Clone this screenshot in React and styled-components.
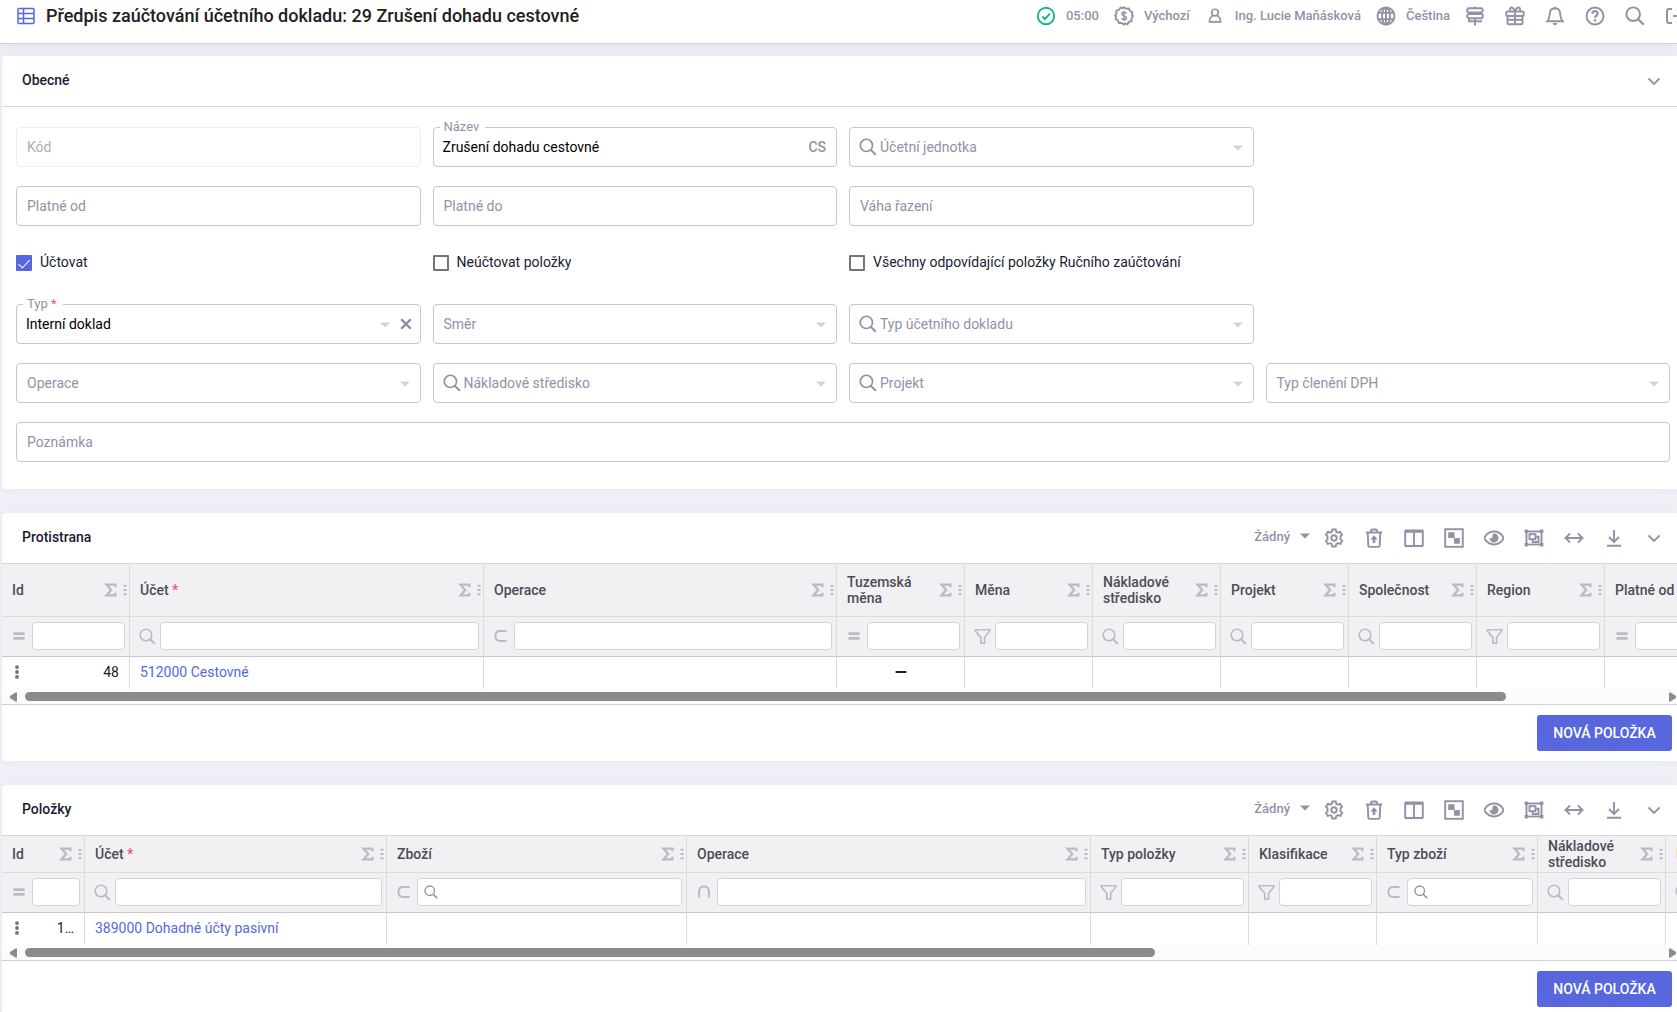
import React from "react";
import styled, { createGlobalStyle, css } from "styled-components";

const App = () => {
  return (
    <Page>
      <GlobalStyle />
      <Header />
      <Main>
        <General />
        <Grid
          title="Protistrana"
          columns={counterpartColumns}
          cells={[<>48</>, <a href="#512000">512000 Cestovné</a>, null, <Icon name="dash" size={12} />]}
          headHeight={53}
          thumb={90.5}
        />
        <Grid
          title="Položky"
          columns={itemColumns}
          cells={[<>1…</>, <a href="#389000">389000 Dohadné účty pasivní</a>]}
          headHeight={37}
          thumb={69.1}
        />
      </Main>
    </Page>
  );
};

export default App;

const counterpartColumns = [
  { name: "Id", width: 128, filter: "equals", align: "right" },
  { name: "Účet", width: 354, filter: "search", required: true },
  { name: "Operace", width: 353, filter: "subset" },
  { name: "Tuzemská měna", width: 128, filter: "equals", align: "center" },
  { name: "Měna", width: 128, filter: "funnel" },
  { name: "Nákladové středisko", width: 128, filter: "search" },
  { name: "Projekt", width: 128, filter: "search" },
  { name: "Společnost", width: 128, filter: "search" },
  { name: "Region", width: 128, filter: "funnel" },
  { name: "Platné od", width: 128, filter: "equals" },
];

const itemColumns = [
  { name: "Id", width: 83, filter: "equals", align: "right" },
  { name: "Účet", width: 302, filter: "search", required: true },
  { name: "Zboží", width: 300, filter: "subset", lookup: true },
  { name: "Operace", width: 404, filter: "intersect" },
  { name: "Typ položky", width: 158, filter: "funnel" },
  { name: "Klasifikace", width: 128, filter: "funnel" },
  { name: "Typ zboží", width: 161, filter: "subset", lookup: true },
  { name: "Nákladové středisko", width: 128, filter: "search" },
  { name: "Projekt", width: 128, filter: "search" },
];

// all icons live on a 20x20 grid
const icons = {
  table: (
    <>
      <rect x="2" y="2.5" width="16" height="15" rx="1" strokeWidth="1.5" />
      <path d="M2 7.5h16M2 12.5h16M7.5 2.5v15" strokeWidth="1.5" />
    </>
  ),
  check: (
    <>
      <circle cx="10" cy="10" r="8.2" />
      <path d="M6.3 10.3l2.7 2.7 4.8-5.4" />
    </>
  ),
  coin: (
    <>
      <path d="M10 1.2l2.2 1.5 2.7-.3 1 2.5 2.4 1.3-.4 2.7 1 1.1-1.4 2.3.1 2.7-2.6.9-1.5 2.2-2.5-.6-1 1-2.4-1.6-2.7.2-.9-2.5L1.7 13l.5-2.6L1 9.6l1.5-2.2-.1-2.7 2.6-.9 1.6-2.2 2.4.6z" />
      <path d="M12.3 7.7c-.3-1-1.2-1.4-2.3-1.4-1.2 0-2.2.5-2.2 1.7 0 2.7 4.6 1.2 4.6 3.9 0 1.2-1.1 1.8-2.4 1.8s-2.2-.6-2.4-1.6M10 5v10" strokeWidth="1.4" />
    </>
  ),
  user: (
    <>
      <circle cx="10" cy="6.2" r="3.7" />
      <path d="M7.4 9.3L6 11c-1.2.8-2 2-2 3.6v1.9h12v-1.9c0-1.6-.8-2.800-2-3.600l-1.400-1.700" />
    </>
  ),
  globe: (
    <>
      <circle cx="10" cy="10" r="8.5" />
      <ellipse cx="10" cy="10" rx="4" ry="8.5" />
      <path d="M2.8 6.8h14.4M2.8 13.2h14.4M10 1.5v17" />
    </>
  ),
  signpost: (
    <path d="M10 .5v1.7M10 6.5v1.5M10 12v7.5M3.5 2.2h13l1.5 2.1-1.5 2.2h-13c-.8 0-1.2-.5-1.2-1V3.2c0-.6.4-1 1.2-1zM16.5 8h-13L2 10l1.500 2.200h13c.8 0 1.200-.5 1.200-1V9c0-.6-.4-1-1.200-1zM4 12.200v3h13" />
  ),
  gift: (
    <>
      <rect x="1.3" y="5.5" width="17.4" height="4.5" rx="1" />
      <path d="M2.5 10v7c0 .8.5 1.3 1.300 1.300h12.400c.8 0 1.300-.5 1.300-1.300v-7M10 5.500v12.800M2.500 13.800h15M10 5.500C9 2.800 7.800 1.300 6.300 1.500 4.700 1.700 4.500 4 5.500 5.500M10 5.500c1-2.700 2.200-4.200 3.700-4 1.600.2 1.800 2.500.8 4" />
    </>
  ),
  bell: (
    <>
      <path d="M10 .7v1.600M10 2.300c-3.300 0-5 2.300-5.200 5.200-.3 3.800-.8 6-2.600 7.800h15.600c-1.800-1.800-2.300-4-2.600-7.800C15 4.600 13.300 2.300 10 2.300z" />
      <path d="M7.800 17h4.400c-.2 1.400-1 2.200-2.200 2.200S8 18.400 7.800 17z" fill="currentColor" stroke="none" />
    </>
  ),
  question: (
    <>
      <circle cx="10" cy="10" r="8.5" />
      <path d="M7.3 7.7C7.400 6 8.500 5.200 10 5.200s2.700.9 2.700 2.400c0 1.900-2.600 2.100-2.600 4.200" strokeWidth="2.2" />
      <path d="M10 13.3v2.2" strokeWidth="2.4" />
    </>
  ),
  search: (
    <>
      <circle cx="8.2" cy="8.2" r="6.8" />
      <path d="M13.2 13.2l5.5 5.5" strokeWidth="2.3" />
    </>
  ),
  logout: <path d="M7 3H4.2C2.8 3 2 3.8 2 5v10c0 1.2.8 2 2.2 2H7M8 10h10M14.5 6l4 4-4 4" />,
  gear: (
    <>
      <path d="M8.3 1.5h3.4l.5 2.3 1.7.9 2.2-.9 1.9 2.8-1.5 1.8c-.2.9-.2 1.7 0 2.8l1.7 1.7-1.8 2.9-2.4-.7-1.7 1.1-.6 2.3H8.3l-.6-2.3-1.6-1-2.4.7-1.8-2.9 1.7-1.7c-.2-1-.2-1.9 0-2.9L2 6.7l1.9-2.900 2.200.9 1.700-.9z" />
      <circle cx="10" cy="10" r="2.7" />
    </>
  ),
  trash: (
    <>
      <path d="M1.8 4.5h16.4M7 4.3V2.8c0-.8.5-1.3 1.3-1.3h3.4c.8 0 1.3.5 1.3 1.3v1.5M3.7 4.5l.6 13c0 .9.5 1.4 1.3 1.4h8.8c.8 0 1.300-.5 1.300-1.400l.6-13" />
      <path d="M10 7.2l3.6 4.2h-2.3v3.7H8.7v-3.7H6.4z" fill="currentColor" stroke="none" />
    </>
  ),
  columns: (
    <>
      <rect x="1.2" y="2.5" width="17.6" height="15.5" rx=".5" />
      <path d="M1.2 3.5h17.6" strokeWidth="2.6" />
      <path d="M10 3v15" />
    </>
  ),
  squares: (
    <>
      <rect x="1.2" y="1.2" width="17.6" height="17.6" />
      <path d="M4.2 4.2h6.3v5.8h5.3v5.8H10V10H4.2z" fill="currentColor" stroke="none" />
    </>
  ),
  eye: (
    <>
      <path d="M.2 10C2.5 5.7 6 3.5 10 3.5s7.5 2.2 9.8 6.5c-2.3 4.3-5.8 6.5-9.8 6.5S2.5 14.3.2 10z" />
      <path d="M10 5.5A4.5 4.5 0 1 1 5.5 10c.6.4 1.4.4 2 0 1.2-.7 1.2-1.7.9-2.7C8.6 6.3 9 5.6 10 5.5z" fill="currentColor" stroke="none" />
    </>
  ),
  group: (
    <>
      <rect x="2.5" y="3.5" width="15" height="13" />
      <rect x="5.5" y="6.2" width="6" height="5" />
      <path d="M11.5 8.7h3V14H8.7v-2.8" />
      <path d="M.6 1.6H4V5H.6zM16 1.6h3.4V5H16zM.6 15H4v3.4H.6zM16 15h3.4v3.4H16z" fill="currentColor" stroke="none" />
    </>
  ),
  arrows: <path d="M1.5 10h17M6 5.5L1.5 10 6 14.5M14 5.5l4.5 4.5-4.5 4.5" />,
  download: <path d="M10 2v12M5 9l5 5 5-5M3 17.8h14" />,
  chevron: <path d="M4.5 7.5L10 13l5.5-5.5" />,
  clear: <path d="M2 2l16 16M18 2L2 18" strokeWidth="3.8" />,
  funnel: <path d="M1.5 2h17v1.5l-6 7.5v7H8v-7L1.500 3.500z" />,
  equals: <path d="M2 6.500h16M2 13.500h16" strokeWidth="4" />,
  subset: <path d="M18 3H9c-4 0-7 2.500-7 7s3 7 7 7h9" strokeWidth="2.8" />,
  intersect: <path d="M3 18V9c0-4 2.500-7 7-7s7 3 7 7v9" strokeWidth="2.8" />,
  sigma: <path d="M16.300 6V2.300H3.500L10.300 10l-6.800 7.700h12.800V14" strokeWidth="3.2" />,
  caret: <path d="M0 5h20L10 15z" fill="currentColor" stroke="none" />,
  left: <path d="M16 1v18h-3L2 12V8l11-7z" fill="currentColor" stroke="none" />,
  right: <path d="M4 1v18h3l11-7V8L7 1z" fill="currentColor" stroke="none" />,
  dash: <path d="M1 10h18" strokeWidth="3.4" />,
  more: (
    <g fill="currentColor" stroke="none">
      <circle cx="10" cy="3" r="2.8" />
      <circle cx="10" cy="10" r="2.8" />
      <circle cx="10" cy="17" r="2.8" />
    </g>
  ),
  drag: <path d="M7.500 3h5M7.500 10h5M7.500 17h5" strokeWidth="3.4" />,
};

const Icon = ({ name, size = 20 }) => (
  <Svg viewBox="0 0 20 20" width={size} height={size} aria-hidden="true">
    {icons[name]}
  </Svg>
);

const Header = () => (
  <TopBar>
    <TitleBox>
      <Icon name="table" />
      <Title>Předpis zaúčtování účetního dokladu: 29 Zrušení dohadu cestovné</Title>
    </TitleBox>
    <Menu>
      <MenuItem $ok>
        <IconBox>
          <Icon name="check" />
        </IconBox>
        <span>05:00</span>
      </MenuItem>
      <MenuItem>
        <IconBox>
          <Icon name="coin" />
        </IconBox>
        <span>Výchozí</span>
      </MenuItem>
      <MenuItem>
        <IconBox>
          <Icon name="user" size={18} />
        </IconBox>
        <span>Ing. Lucie Maňásková</span>
      </MenuItem>
      <MenuItem>
        <IconBox>
          <Icon name="globe" />
        </IconBox>
        <span>Čeština</span>
      </MenuItem>
      {["signpost", "gift", "bell", "question", "search", "logout"].map((name) => (
        <IconButton key={name} aria-label={name}>
          <Icon name={name} />
        </IconButton>
      ))}
    </Menu>
  </TopBar>
);

const Field = ({ id, label, value, kind = "text", lookup, required, disabled, lang, wide }) => (
  <FieldBox $wide={wide}>
    {kind === "select" ? (
      <Select id={id} defaultValue={value || ""}>
        <option value=""></option>
        {value && <option value={value}>{value}</option>}
      </Select>
    ) : (
      <Input id={id} defaultValue={value} disabled={disabled} />
    )}
    <Label htmlFor={id} $floating={!!value} $lookup={lookup} $disabled={disabled}>
      {lookup && <Icon name="search" size={18} />}
      <span>
        {label}
        {required && <Star> *</Star>}
      </span>
    </Label>
    <Adornment>
      {lang && <Lang>{lang}</Lang>}
      {(kind === "select" || lookup) && (
        <Caret>
          <Icon name="caret" size={10} />
        </Caret>
      )}
      {kind === "select" && value && (
        <Clear type="button" aria-label="Vymazat">
          <Icon name="clear" size={12} />
        </Clear>
      )}
    </Adornment>
  </FieldBox>
);

const Check = ({ id, label, checked }) => (
  <CheckBox>
    <input type="checkbox" id={id} defaultChecked={checked} />
    <label htmlFor={id}>{label}</label>
  </CheckBox>
);

const General = () => (
  <Card>
    <CardHead>
      <CardTitle>Obecné</CardTitle>
      <Tools>
        <IconButton aria-label="Sbalit">
          <Icon name="chevron" />
        </IconButton>
      </Tools>
    </CardHead>
    <Form>
      <Row>
        <Field id="kod" label="Kód" disabled />
        <Field id="nazev" label="Název" value="Zrušení dohadu cestovné" lang="CS" />
        <Field id="jednotka" label="Účetní jednotka" lookup />
      </Row>
      <Row>
        <Field id="od" label="Platné od" />
        <Field id="do" label="Platné do" />
        <Field id="vaha" label="Váha řazení" />
      </Row>
      <Row>
        <Check id="uctovat" label="Účtovat" checked />
        <Check id="neuctovat" label="Neúčtovat položky" />
        <Check id="vsechny" label="Všechny odpovídající položky Ručního zaúčtování" />
      </Row>
      <Row>
        <Field id="typ" label="Typ" kind="select" value="Interní doklad" required />
        <Field id="smer" label="Směr" kind="select" />
        <Field id="typdokladu" label="Typ účetního dokladu" lookup />
      </Row>
      <Row>
        <Field id="operace" label="Operace" kind="select" />
        <Field id="stredisko" label="Nákladové středisko" lookup />
        <Field id="projekt" label="Projekt" lookup />
        <Field id="dph" label="Typ členění DPH" kind="select" />
      </Row>
      <Row>
        <Field id="poznamka" label="Poznámka" wide />
      </Row>
    </Form>
  </Card>
);

const Grid = ({ title, columns, cells, headHeight, thumb }) => (
  <Card>
    <CardHead>
      <CardTitle>{title}</CardTitle>
      <Tools>
        <NoneButton>
          Žádný
          <Icon name="caret" size={10} />
        </NoneButton>
        {["gear", "trash", "columns", "squares", "eye", "group", "arrows", "download", "chevron"].map((name) => (
          <IconButton key={name} aria-label={name}>
            <Icon name={name} />
          </IconButton>
        ))}
      </Tools>
    </CardHead>
    <Scroller>
      <Table>
        <colgroup>
          {columns.map((c, i) => (
            <Col key={i} $width={c.width} />
          ))}
        </colgroup>
        <thead>
          <tr>
            {columns.map((c, i) => (
              <Th key={i} $height={headHeight} scope="col">
                <ThInner>
                  <ThName>
                    {c.name}
                    {c.required && <Star> *</Star>}
                  </ThName>
                  <Icon name="sigma" size={14} />
                  <Icon name="drag" size={12} />
                </ThInner>
              </Th>
            ))}
          </tr>
          <tr>
            {columns.map((c, i) => (
              <FilterCell key={i}>
                <FilterInner>
                  <FilterIcon>
                    <Icon name={c.filter} size={c.filter === "search" || c.filter === "funnel" ? 17 : 14} />
                  </FilterIcon>
                  <FilterBox>
                    {c.lookup && <Icon name="search" size={14} />}
                    <input aria-label={"Filtr " + c.name} />
                  </FilterBox>
                </FilterInner>
              </FilterCell>
            ))}
          </tr>
        </thead>
        <tbody>
          <tr>
            {columns.map((c, i) => (
              <Td key={i} $align={c.align}>
                {i === 0 ? (
                  <IdCell>
                    <MoreButton aria-label="Akce">
                      <Icon name="more" size={14} />
                    </MoreButton>
                    <span>{cells[0]}</span>
                  </IdCell>
                ) : (
                  cells[i]
                )}
              </Td>
            ))}
          </tr>
        </tbody>
      </Table>
    </Scroller>
    <ScrollBar>
      <Icon name="left" size={10} />
      <Track>
        <Thumb style={{ width: thumb + "%" }} />
      </Track>
      <Icon name="right" size={10} />
    </ScrollBar>
    <Foot>
      <Primary>NOVÁ POLOŽKA</Primary>
    </Foot>
  </Card>
);

const GlobalStyle = createGlobalStyle`
  * {
    box-sizing: border-box;
  }
  html {
    scrollbar-width: none;
  }
  body {
    margin: 0;
    background: #f0f1f7;
    overflow-x: hidden;
    font-family: Roboto, sans-serif;
    font-size: 14px;
    color: #212121;
  }
  button, input, select {
    font: inherit;
  }
  button {
    border: none;
    background: none;
    padding: 0;
    cursor: pointer;
  }
  a {
    color: #5867dd;
    text-decoration: none;
  }
`;

const Svg = styled.svg`
  display: block;
  flex-shrink: 0;
  fill: none;
  stroke: currentColor;
  stroke-width: 1.9;
`;

const Page = styled.div`
  overflow-x: hidden;
`;

const TopBar = styled.header`
  display: flex;
  justify-content: space-between;
  height: 44px;
  background: white;
  border-bottom: 1px solid #d0d1d5;
  box-shadow: 0 1px 10px rgba(69, 65, 78, 0.1);
`;

const TitleBox = styled.div`
  display: flex;
  align-items: center;
  height: 31px;
  padding-left: 16px;
  gap: 10px;
  color: #5867dd;
`;

const Title = styled.h1`
  margin: 0;
  font-size: 18px;
  font-weight: 500;
  color: #212121;
  white-space: nowrap;
`;

const Menu = styled.div`
  display: flex;
  align-items: center;
  height: 31px;
  margin-right: -18px;
  color: #9192a6;
`;

const MenuItem = styled.div`
  display: flex;
  align-items: center;
  padding-right: 5px;
  font-size: 13px;
  font-weight: 500;
  white-space: nowrap;
  svg {
    color: ${(props) => (props.$ok ? "#12b886" : "inherit")};
  }
`;

const IconBox = styled.span`
  display: flex;
  justify-content: center;
  width: 40px;
`;

const IconButton = styled.button`
  display: flex;
  align-items: center;
  justify-content: center;
  width: 40px;
  height: 32px;
  color: #9192a6;
`;

const Main = styled.main`
  display: flex;
  flex-direction: column;
  gap: 24px;
  padding: 12px 0 12px 2px;
`;

const Card = styled.section`
  background: white;
  border-radius: 4px 0 0 4px;
  box-shadow: 0 0 13px rgba(82, 63, 105, 0.05);
`;

const CardHead = styled.div`
  display: flex;
  align-items: center;
  justify-content: space-between;
  height: 51px;
  padding: 0 3px 1px 20px;
  border-bottom: 1px solid #d6d7da;
`;

const CardTitle = styled.h2`
  margin: 0;
  padding-bottom: 2px;
  font-size: 14px;
  font-weight: 500;
  color: #1b1b33;
`;

const Tools = styled.div`
  display: flex;
  align-items: center;
`;

const NoneButton = styled.button`
  display: flex;
  align-items: center;
  gap: 10px;
  padding: 0 4px 3px 0;
  font-size: 13px;
  font-weight: 500;
  color: #9192a6;
`;

const Form = styled.form`
  display: flex;
  flex-direction: column;
  gap: 19px;
  padding: 20px 7px 27px 14px;
`;

const Row = styled.div`
  display: grid;
  grid-template-columns: repeat(4, 1fr);
  gap: 12px;
`;

const FieldBox = styled.div`
  position: relative;
  height: 40px;
  ${(props) =>
    props.$wide &&
    css`
      grid-column: 1 / -1;
    `}
`;

const control = css`
  width: 100%;
  height: 40px;
  padding: 0 9px;
  border: 1px solid #c5c6d0;
  border-radius: 4px;
  outline: none;
  background: white;
  color: black;
`;

const Input = styled.input`
  ${control}
  &:focus {
    border-color: #5867dd;
  }
  &:disabled {
    border-color: #eeeef0;
  }
`;

const Select = styled.select`
  ${control}
  appearance: none;
`;

const Label = styled.label`
  position: absolute;
  top: 0;
  left: 11px;
  display: flex;
  align-items: center;
  gap: 3px;
  height: 40px;
  color: #9192a6;
  opacity: ${(props) => (props.$disabled ? 0.75 : 1)};
  ${(props) =>
    props.$lookup &&
    css`
      left: 10px;
    `}
  ${(props) =>
    props.$floating &&
    css`
      top: -9px;
      left: 7px;
      height: 16px;
      padding: 0 6px 0 4px;
      font-size: 13px;
      background: white;
    `}
`;

const Star = styled.span`
  color: #f4516c;
`;

const Adornment = styled.div`
  position: absolute;
  top: 0;
  right: 11px;
  display: flex;
  align-items: center;
  gap: 10px;
  height: 40px;
  color: #9192a6;
`;

const Lang = styled.span`
  font-weight: 500;
`;

const Caret = styled.span`
  padding-top: 2px;
  color: #d2d3da;
`;

const Clear = styled.button`
  margin-right: -2px;
  color: #8a8b9f;
`;

const CheckBox = styled.div`
  display: flex;
  align-items: center;
  gap: 8px;
  height: 40px;
  padding-bottom: 4px;
  color: #1b1b33;
  label {
    padding-bottom: 2px;
  }
  input {
    appearance: none;
    width: 16px;
    height: 16px;
    margin: 0;
    border: 2px solid #757575;
    border-radius: 1px;
  }
  input:checked {
    border-color: #5867dd;
    background: #5867dd;
    display: grid;
    place-items: center;
  }
  input:checked::before {
    content: "";
    width: 5px;
    height: 10px;
    margin-bottom: 3px;
    border: solid white;
    border-width: 0 1px 1px 0;
    transform: rotate(42deg);
  }
`;

const Scroller = styled.div`
  overflow: hidden;
`;

const Table = styled.table`
  width: 0;
  table-layout: fixed;
  border-spacing: 0;
`;

const Col = styled.col`
  width: ${(props) => props.$width}px;
`;

const Th = styled.th`
  height: ${(props) => props.$height}px;
  padding: 0;
  background: #f1f1f4;
  border-right: 1px solid #dcdce0;
  border-bottom: 1px solid #dcdce0;
  text-align: left;
  font-weight: 500;
  line-height: 16px;
  color: #4d4d57;
`;

const ThInner = styled.div`
  display: flex;
  align-items: center;
  padding-left: 10px;
  svg {
    color: #babbc8;
  }
  svg:last-child {
    margin: 0 -2px 0 1px;
  }
`;

const ThName = styled.span`
  flex: 1;
`;

const FilterCell = styled.td`
  height: 40px;
  padding: 0 0 1px;
  background: #f1f1f4;
  border-right: 1px solid #dcdce0;
  border-bottom: 1px solid #c5c6ca;
`;

const FilterInner = styled.div`
  display: flex;
  align-items: center;
  padding-right: 4px;
`;

const FilterIcon = styled.span`
  display: flex;
  justify-content: center;
  width: 30px;
  padding-left: 4px;
  flex-shrink: 0;
  color: #babbc8;
`;

const FilterBox = styled.div`
  display: flex;
  align-items: center;
  flex: 1;
  min-width: 0;
  height: 28px;
  padding: 0 6px;
  border: 1px solid #d3d4dc;
  border-radius: 4px;
  background: white;
  color: #9192a6;
  input {
    flex: 1;
    width: 0;
    min-width: 0;
    padding: 0;
    border: none;
    outline: none;
    background: none;
  }
`;

const Td = styled.td`
  height: 32px;
  padding: 0 10px 2px;
  border-right: 1px solid #dcdce0;
  text-align: ${(props) => props.$align || "left"};
  white-space: nowrap;
  overflow: hidden;
  svg {
    margin: 0 auto;
  }
`;

const IdCell = styled.div`
  display: flex;
  align-items: center;
  justify-content: space-between;
`;

const MoreButton = styled.button`
  margin-left: -2px;
  color: #74757a;
`;

const ScrollBar = styled.div`
  display: flex;
  align-items: center;
  gap: 6px;
  height: 16px;
  padding: 0 0 0 7px;
  background: #fcfcfc;
  border-bottom: 1px solid #d0d1d8;
  color: #8b8b8b;
`;

const Track = styled.div`
  flex: 1;
`;

const Thumb = styled.div`
  height: 9px;
  border-radius: 5px;
  background: #8b8b8b;
`;

const Foot = styled.div`
  display: flex;
  justify-content: flex-end;
  padding: 10px 5px;
`;

const Primary = styled.button`
  min-width: 135px;
  height: 36px;
  padding: 0 16px;
  border-radius: 3px;
  background: #5867dd;
  font-weight: 500;
  color: white;
`;
